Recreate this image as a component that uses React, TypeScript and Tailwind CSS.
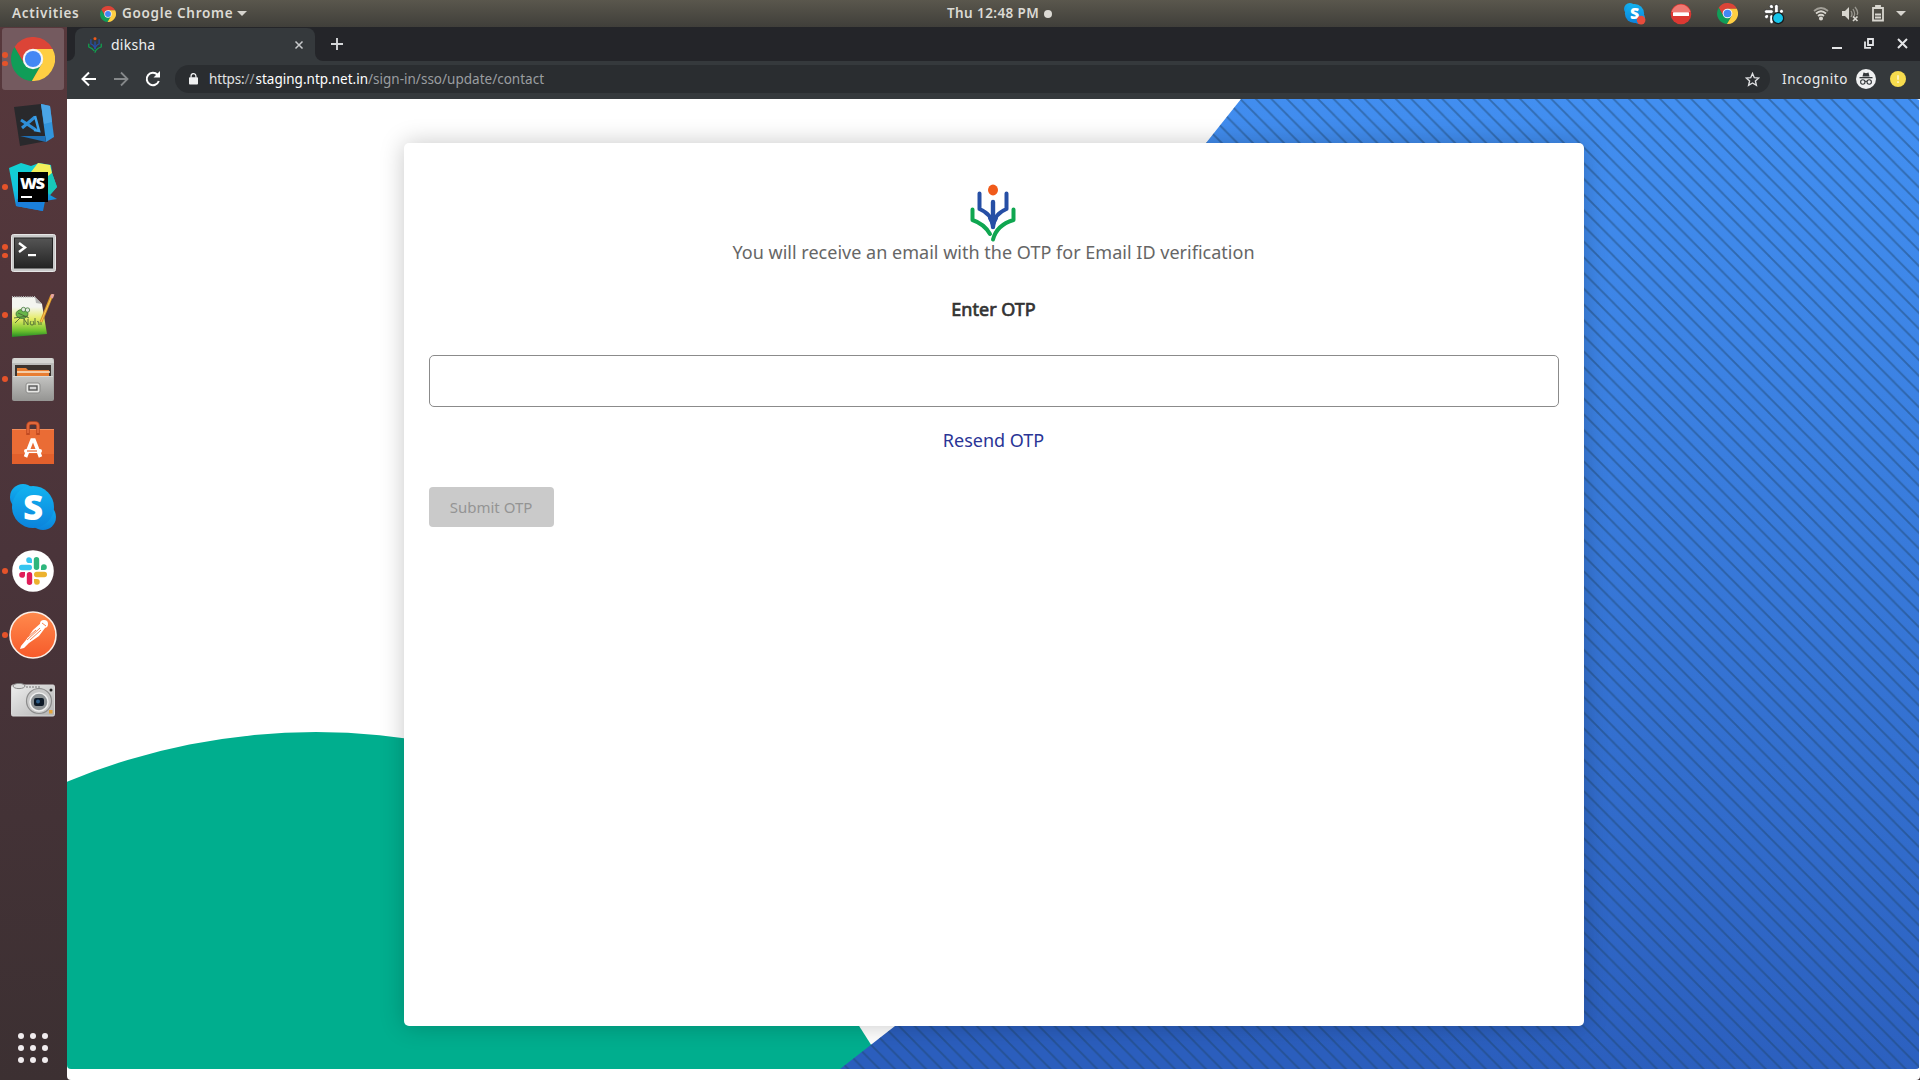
import React from "react";

const ubuntu = "font-['Noto_Sans',sans-serif]";

function Chrome({ size }: { size: number }) {
  return (
    <svg width={size} height={size} viewBox="-22 -22 44 44" className="shrink-0">
      <path d="M-18.46-11.97L-8.66 5L0 0L0-10L19.6-10A22 22 0 0 0-18.46-11.97Z" fill="#dc4437" />
      <path d="M-18.46-11.97A22 22 0 0 0-1.14 21.97L8.66 5L0 0L-8.66 5Z" fill="#109d58" />
      <path d="M19.6-10A22 22 0 0 1-1.14 21.97L8.66 5L0 0L0-10Z" fill="#fece43" />
      <circle r="10.2" fill="#f4f5f8" />
      <circle r="8.1" fill="#4487f4" />
    </svg>
  );
}

function Diksha({ width, height }: { width: number; height: number }) {
  return (
    <svg width={width} height={height} viewBox="0 0 46 58" preserveAspectRatio="none" fill="none" strokeLinecap="round" strokeLinejoin="round">
      <ellipse cx="23" cy="6" rx="5" ry="5.4" fill="#f05a1a" />
      <g stroke="#264fa5" strokeWidth="4">
        <path d="M9.5 9.500V25C17 28 22 33 23 42C24 33 29 28 36.500 25V9.500" />
        <path d="M23 18V43" strokeWidth="4.400" />
        <path d="M20 34L23 40L26 34" />
      </g>
      <g stroke="#0fa650" strokeWidth="4">
        <path d="M2.500 25.500V36C10 38.500 16 43 20 50" />
        <path d="M43.500 25.500V36C35 38.500 26 44 23 55.500" />
      </g>
    </svg>
  );
}

function SkypeIcon({ size, busy }: { size: number; busy?: boolean }) {
  return (
    <svg width={size} height={size} viewBox="0 0 46 46" className="overflow-visible">
      <defs>
        <linearGradient id="sky" x1="0" y1="0" x2="0" y2="1">
          <stop offset="0" stopColor="#12b3f0" />
          <stop offset="1" stopColor="#0b83dc" />
        </linearGradient>
      </defs>
      <g fill="url(#sky)">
        <circle cx="13" cy="13" r="13" />
        <circle cx="33" cy="33" r="13" />
        <circle cx="23" cy="23" r="21" />
      </g>
      <text x="23" y="35.500" textAnchor="middle" fontFamily="Open Sans, sans-serif" fontWeight="800" fontSize="35" fill="#fff">S</text>
      {busy && <circle cx="37.500" cy="37.500" r="9.500" fill="#e74c3c" />}
    </svg>
  );
}

function VSCode() {
  return (
    <svg width="42" height="44" viewBox="0 0 42 44">
      <path d="M0 4L27 1L33 38L6 43Z" fill="#29292c" />
      <path d="M27 1L36 3L40 34L32 39Z" fill="#3295dc" />
      <path d="M6 33L31 33L32 39Z" fill="#1f6fb4" />
      <path d="M27 1L36 3L38 19L30 21Z" fill="#4aa5e6" />
      <path d="M7 17L22 27M8 25L21 14" stroke="#2f8fd8" strokeWidth="3" />
      <path d="M21 13L25 28L20 27" stroke="#3ba0ea" strokeWidth="2.500" fill="none" />
    </svg>
  );
}

function WebStorm() {
  return (
    <svg width="48" height="48" viewBox="0 0 48 48">
      <defs>
        <linearGradient id="wsg" x1="0" y1="0" x2="0.300" y2="1">
          <stop offset="0" stopColor="#12d3cf" />
          <stop offset="0.550" stopColor="#12c6e0" />
          <stop offset="1" stopColor="#1586dd" />
        </linearGradient>
      </defs>
      <path d="M0 5L12 0L22 3L30 0L42 2L43 10L48 24L41 32L48 36L36 38L34 48L7 43Z" fill="url(#wsg)" />
      <path d="M22 9L29 0L41 2L43 10L39 15Z" fill="#f3f05a" />
      <path d="M39 13L43 10L48 24L41 32L39 30Z" fill="#18c8b8" />
      <path d="M8 36L34 38L34 48L7 43Z" fill="#1b7fdb" />
      <rect x="9" y="9" width="30" height="30" fill="#000" />
      <text x="11" y="25.500" fontFamily="Open Sans, sans-serif" fontWeight="800" fontSize="16.500" textLength="25" fill="#fff">WS</text>
      <rect x="12" y="33" width="11" height="2" fill="#fff" />
    </svg>
  );
}

function Terminal() {
  return (
    <svg width="45" height="38" viewBox="0 0 45 38">
      <defs>
        <linearGradient id="term" x1="0" y1="0" x2="0" y2="1">
          <stop offset="0" stopColor="#555" />
          <stop offset="1" stopColor="#242424" />
        </linearGradient>
      </defs>
      <rect x="0.500" y="0.500" width="44" height="37" rx="2" fill="#c9c9c9" stroke="#e6e6e6" />
      <rect x="3.500" y="4" width="38" height="30" fill="url(#term)" stroke="#222" />
      <path d="M8 9L14 13.500L8 18" stroke="#fff" strokeWidth="2.400" fill="none" />
      <rect x="17" y="20" width="8" height="2.200" fill="#fff" />
    </svg>
  );
}

function Notepad() {
  return (
    <svg width="46" height="46" viewBox="0 0 46 46">
      <defs>
        <linearGradient id="note" x1="0" y1="0" x2="0" y2="1">
          <stop offset="0.250" stopColor="#f4f5f0" />
          <stop offset="0.550" stopColor="#e5ec64" />
          <stop offset="0.850" stopColor="#6cc02d" />
          <stop offset="1" stopColor="#278a26" />
        </linearGradient>
      </defs>
      <path d="M2 3L25 3L32 10L37 40L2 43Z" fill="url(#note)" />
      <path d="M2 3H25" stroke="#bbb" strokeWidth="2" strokeDasharray="1 1.200" />
      <path d="M25 3L26 9L32 10Z" fill="#b5b5b5" />
      <g fill="#69b64a" stroke="#2f6b2a" strokeWidth="0.700">
        <ellipse cx="12" cy="20" rx="6" ry="4.500" />
        <circle cx="13.500" cy="15.500" r="2.200" fill="#dfe8da" />
        <circle cx="17.500" cy="16" r="2.200" fill="#dfe8da" />
      </g>
      <path d="M4 24L18 22M8 19L19 24M14 24V31M14 25L18 31V25M21 27Q19 31 22 31T23 27M25 24V31M27 28Q29 26 29 31M31 26V31M5 29L10 24" stroke="#4c6534" strokeWidth="0.900" fill="none" />
      <path d="M42 1L31 28" stroke="#db9428" strokeWidth="3" />
      <path d="M43 0L41.500 4" stroke="#e7a6a0" strokeWidth="3" />
      <path d="M41 4L31 28" stroke="#f6cd5c" strokeWidth="1" />
    </svg>
  );
}

function Files() {
  return (
    <svg width="42" height="43" viewBox="0 0 42 43">
      <defs>
        <linearGradient id="cab" x1="0" y1="0" x2="0" y2="1">
          <stop offset="0" stopColor="#c4c4c2" />
          <stop offset="1" stopColor="#969694" />
        </linearGradient>
      </defs>
      <rect width="42" height="43" rx="2" fill="url(#cab)" />
      <path d="M2 0H40L42 5H0Z" fill="#d6d6d3" />
      <rect x="3" y="7" width="36" height="12" fill="#3c3430" />
      <path d="M5 10H14L16 12H37V19H5Z" fill="#e87d31" />
      <path d="M5 14H38" stroke="#f9e7cf" strokeWidth="1.500" />
      <rect x="1" y="18" width="40" height="24" fill="url(#cab)" />
      <path d="M1 18.500H41" stroke="#d9d9d6" />
      <rect x="14" y="25" width="14" height="10" rx="2" fill="#e6e6e4" stroke="#8a8a88" />
      <rect x="17" y="28" width="8" height="4" fill="#d5d5d5" stroke="#555" strokeWidth="1.400" />
    </svg>
  );
}

function Software() {
  return (
    <svg width="42" height="44" viewBox="0 0 42 44">
      <rect x="0" y="8" width="42" height="35" rx="1" fill="#ea6c35" />
      <path d="M0 33H42V43H0Z" fill="#e2602c" />
      <path d="M0 8.500H42" stroke="#f28d5b" />
      <path d="M16 14V5Q16 2 19 2H23Q26 2 26 5V14" stroke="#c04a22" strokeWidth="3.600" fill="none" />
      <path d="M16 12V5Q16 2 19 2H23Q26 2 26 5V12" stroke="#e0683c" strokeWidth="1.800" fill="none" />
      <path d="M13.500 36L20 19H22L28.500 36" stroke="#fff" strokeWidth="3.600" fill="none" />
      <rect x="12" y="28" width="18" height="4" rx="2" fill="#fff" />
      <path d="M15 30H25" stroke="#e86732" strokeWidth="1.200" />
    </svg>
  );
}

function SlackMark({ mono }: { mono?: boolean }) {
  const colors = mono ? ["#fff", "#fff", "#fff", "#fff"] : ["#36c5f0", "#2eb67d", "#e01e5a", "#ecb22e"];
  return (
    <>
      {colors.map((color, index) => (
        <g key={index} fill={color} stroke={mono ? "#222" : "none"} strokeWidth="1" transform={`rotate(${[0, 90, 270, 180][index]})`}>
          <rect x="-14" y="-6.200" width="13" height="5.400" rx="2.700" />
          <path d="M-1-8V-11.200A2.900 2.900 0 1 0-3.900-8Z" />
        </g>
      ))}
    </>
  );
}

function SlackIcon() {
  return (
    <svg width="42" height="42" viewBox="-21 -21 42 42">
      <circle r="20.800" fill="#fff" />
      <SlackMark />
    </svg>
  );
}

function Postman() {
  return (
    <svg width="48" height="48" viewBox="0 0 48 48">
      <defs>
        <linearGradient id="post" x1="0" y1="0" x2="0" y2="1">
          <stop offset="0" stopColor="#ff8a4d" />
          <stop offset="1" stopColor="#f65a2a" />
        </linearGradient>
      </defs>
      <circle cx="24" cy="24" r="23" fill="url(#post)" stroke="#fbeee6" strokeWidth="1.600" />
      <circle cx="35" cy="13" r="4" fill="#fff" />
      <path d="M32 12L24 19L17 29L12 35L11 38L15 37L20 32L30 25L36 17Z" fill="#fff" />
      <path d="M31 17L18 29M32 19L21 29M27 19L19 26M33 12L37 15" stroke="#f47540" strokeWidth="0.900" />
    </svg>
  );
}

function Camera() {
  return (
    <svg width="44" height="34" viewBox="0 0 44 34">
      <defs>
        <linearGradient id="cam" x1="0" y1="0" x2="1" y2="1">
          <stop offset="0" stopColor="#eee" />
          <stop offset="1" stopColor="#b3b3b3" />
        </linearGradient>
      </defs>
      <rect x="0.500" y="2" width="43" height="31" rx="1.500" fill="url(#cam)" stroke="#d8d8d8" />
      <ellipse cx="8" cy="3" rx="6" ry="2.600" fill="#ddd" stroke="#888" />
      <path d="M15 4H30" stroke="#777" strokeDasharray="2 1" />
      <circle cx="28" cy="18" r="12.500" fill="#c8c8c8" stroke="#8b8b8b" strokeWidth="1.200" />
      <circle cx="28" cy="19" r="9" fill="#8d9295" stroke="#eee" strokeWidth="1.500" />
      <rect x="23" y="15" width="10" height="8" rx="2" fill="#0c1826" />
      <circle cx="27" cy="18.500" r="2" fill="#2c5c88" />
      <circle cx="40" cy="7" r="1.500" fill="#222" />
      <rect x="38" y="27" width="3.500" height="3.500" fill="#e3a33a" />
    </svg>
  );
}

const dock: { icon: React.ReactNode; dots: number; active?: boolean }[] = [
  { icon: <Chrome size={44} />, dots: 2, active: true },
  { icon: <div className="pt-1 pl-1"><VSCode /></div>, dots: 0 },
  { icon: <WebStorm />, dots: 1 },
  { icon: <div className="pt-[3px]"><Terminal /></div>, dots: 2 },
  { icon: <div className="pt-[3px]"><Notepad /></div>, dots: 1 },
  { icon: <Files />, dots: 1 },
  { icon: <Software />, dots: 0 },
  { icon: <SkypeIcon size={46} />, dots: 0 },
  { icon: <SlackIcon />, dots: 1 },
  { icon: <Postman />, dots: 1 },
  { icon: <div className="pt-[2px]"><Camera /></div>, dots: 0 },
];

function TopBar() {
  return (
    <header className={`flex h-[27px] shrink-0 items-center bg-linear-to-b from-[#5a574d] to-[#403f3a] text-[13.5px] font-semibold text-[#dcdad4] ${ubuntu}`}>
      <div className="flex w-[945px] items-center pl-3">
        <span className="w-[88px] whitespace-nowrap tracking-[0.720px]">Activities</span>
        <Chrome size={16} />
        <span className="ml-[6px] w-[112px] whitespace-nowrap tracking-[0.700px]">Google Chrome</span>
        <span className="ml-[3px] border-x-[5px] border-t-[5px] border-x-transparent border-t-[#d6d4ce]" />
      </div>
      <span className="w-[96px] whitespace-nowrap pl-[2px] tracking-[0.400px]">Thu 12:48 PM</span>
      <span className="ml-[3px] size-2 rounded-full bg-[#dcdad4]" />
      <div className="ml-auto flex items-center pr-[14px]">
        <div className="mr-[25px]"><SkypeIcon size={21} busy /></div>
        <svg width="22" height="22" viewBox="0 0 22 22">
          <circle cx="11" cy="11" r="10.300" fill="#dc3832" />
          <path d="M1.500 9A9.800 9.800 0 0 1 20.500 9Z" fill="#ee7973" />
          <rect x="3" y="9.200" width="16" height="3.800" rx="0.600" fill="#fff" />
        </svg>
        <div className="ml-[25px]"><Chrome size={21} /></div>
        <svg className="ml-[25px]" width="22" height="22" viewBox="-16 -16 32 32">
          <SlackMark mono />
          <circle cx="6" cy="6" r="8" fill="#16c5ea" stroke="#171a1c" strokeWidth="1.800" />
        </svg>
        <svg className="ml-[28px]" width="16" height="15" viewBox="0 0 16 15" fill="none" stroke="#d8d6cf" strokeWidth="1.700">
          <path d="M1 5Q8-1 15 5" opacity="0.600" />
          <path d="M3 7.500Q8 3 13 7.500M5 10Q8 7.500 11 10" />
          <circle cx="8" cy="12.500" r="1.200" fill="#d8d6cf" />
        </svg>
        <svg className="ml-[12px]" width="18" height="16" viewBox="0 0 18 16">
          <path d="M1 5H4L8 1V14L4 10H1Z" fill="#d8d6cf" />
          <path d="M10 5Q12 8 10 11M12 3Q15 8 12.500 11M14 1Q18 6 16 9" stroke="#99978f" fill="none" strokeWidth="1.300" />
          <path d="M12 10.500L16.500 15M16.500 10.500L12 15" stroke="#d8d6cf" strokeWidth="1.700" />
        </svg>
        <svg className="ml-[12px]" width="14" height="17" viewBox="0 0 14 17">
          <path d="M5 2V1H9V2M2 3H12V15.500H2Z" stroke="#d8d6cf" strokeWidth="1.800" fill="none" />
          <path d="M4 9.500H10M4 12.500H10" stroke="#d8d6cf" strokeWidth="1.800" />
        </svg>
        <span className="ml-[11px] border-x-[5px] border-t-[5px] border-x-transparent border-t-[#d6d4ce]" />
      </div>
    </header>
  );
}

function Dock() {
  return (
    <aside className="flex w-[67px] shrink-0 flex-col bg-linear-to-b from-[#57383c] via-[#4a343a] to-[#3c3032]">
      {dock.map((item, index) => (
        <div key={index} className="relative flex h-16 w-[66px] items-center justify-center">
          {item.active && <div className="absolute inset-x-[2px] top-[1px] h-[62px] rounded-[3px] bg-[#745a5f]" />}
          <div className="absolute inset-y-0 left-[2px] flex flex-col items-center justify-center gap-[3px]">
            {Array.from({ length: item.dots }, (_, dot) => (
              <span key={dot} className="size-[5.500px] rounded-full bg-[#e5532a]" />
            ))}
          </div>
          <div className="relative">{item.icon}</div>
        </div>
      ))}
      <div className="mt-auto mb-[17px] ml-[18px] grid w-[30px] grid-cols-3 gap-[6px]">
        {Array.from({ length: 9 }, (_, dot) => (
          <span key={dot} className="size-[6px] rounded-full bg-[#f1ecee]" />
        ))}
      </div>
    </aside>
  );
}

function TabStrip() {
  return (
    <div className={`flex h-[34px] shrink-0 items-end bg-[#242529] ${ubuntu}`}>
      <div className="h-[34px] w-2 bg-[#35393c]"><div className="h-full rounded-br-lg bg-[#242529]" /></div>
      <div className="flex h-[33px] w-[240px] items-center rounded-t-lg bg-[#35393c] pl-[13px] text-[14px] text-[#f0f1f2]">
        <Diksha width={14} height={16} />
        <span className="ml-[9px] tracking-[0.250px]">diksha</span>
        <svg className="mr-[11px] ml-auto" width="10" height="10" viewBox="0 0 10 10" stroke="#c8cacc" strokeWidth="1.500">
          <path d="M1.500 1.500L8.500 8.500M8.500 1.500L1.500 8.500" />
        </svg>
      </div>
      <div className="h-[34px] w-2 bg-[#35393c]"><div className="h-full rounded-bl-lg bg-[#242529]" /></div>
      <svg className="mb-[11px] ml-[8px]" width="12" height="12" viewBox="0 0 12 12" stroke="#d5d7d9" strokeWidth="1.900">
        <path d="M6 0V12M0 6H12" />
      </svg>
      <div className="mr-[12px] mb-[12px] ml-auto flex items-end">
        <span className="h-[2px] w-[10px] bg-[#e4e5e7]" />
        <svg className="ml-[22px]" width="10" height="11" viewBox="0 0 10 11" fill="none" stroke="#e4e5e7" strokeWidth="1.800">
          <path d="M4 1H9V7H4ZM1 3.500V9.800H7" />
        </svg>
        <svg className="ml-[23px]" width="11" height="11" viewBox="0 0 11 11" stroke="#e4e5e7" strokeWidth="2">
          <path d="M1 1L10 10M10 1L1 10" />
        </svg>
      </div>
    </div>
  );
}

function Toolbar() {
  return (
    <div className={`flex h-[38px] shrink-0 items-center bg-[#35393c] pb-[2px] pl-[14px] text-[13.500px] ${ubuntu}`}>
      <svg width="16" height="16" viewBox="0 0 16 16" fill="none" stroke="#fff" strokeWidth="2">
        <path d="M15 8H2M8 1.500L1.500 8L8 14.500" />
      </svg>
      <svg className="ml-[16px]" width="16" height="16" viewBox="0 0 16 16" fill="none" stroke="#85888a" strokeWidth="1.800">
        <path d="M1 8H14M8 1.500L14.500 8L8 14.500" />
      </svg>
      <svg className="ml-[16px]" width="16" height="16" viewBox="0 0 16 16" fill="none" stroke="#fff" strokeWidth="2">
        <path d="M13.800 10A6.200 6.200 0 1 1 12.500 3.700L14 5.200" />
        <path d="M15 0V6.500H8.500Z" fill="#fff" stroke="none" />
      </svg>
      <div className="ml-[14px] flex h-7 w-[1595px] items-center rounded-full bg-[#2a2d30] pr-[10px] pl-[14px]">
        <svg width="9" height="12" viewBox="0 0 10 13">
          <rect y="4.500" width="10" height="8" rx="1" fill="#eff0f1" />
          <path d="M2.300 5V3.200A2.700 2.700 0 0 1 7.700 3.200V5" stroke="#eff0f1" strokeWidth="1.400" fill="none" />
        </svg>
        <div className="ml-[11px] flex whitespace-nowrap text-[#9a9da0]">
          <span className="w-[46.500px] tracking-[-0.160px]"><span className="text-[#e2e3e4]">https:</span>//</span>
          <span className="w-[112.500px] tracking-[0.010px] text-white">staging.ntp.net.in</span>
          <span className="tracking-[0.010px]">/sign-in/sso/update/contact</span>
        </div>
        <svg className="ml-auto" width="15" height="15" viewBox="0 0 15 15" fill="none" stroke="#dfe0e2" strokeWidth="1.400">
          <path d="M7.500 1.500L9.300 5.700L13.800 6L10.400 9L11.400 13.300L7.500 11L3.600 13.300L4.600 9L1.200 6L5.700 5.700Z" />
        </svg>
      </div>
      <span className="ml-[12px] w-[67px] whitespace-nowrap tracking-[0.580px] text-[#e9eaec]">Incognito</span>
      <svg className="ml-[7px]" width="20" height="20" viewBox="0 0 20 20">
        <circle cx="10" cy="10" r="10" fill="#f0f1f2" />
        <path d="M6.500 7.500L7.500 3.500L10 4.200L12.500 3.500L13.500 7.500Z" fill="#34383b" />
        <rect x="3.500" y="8" width="13" height="1.300" fill="#34383b" />
        <g fill="none" stroke="#34383b" strokeWidth="1.100">
          <circle cx="6.800" cy="13" r="2.200" />
          <circle cx="13.200" cy="13" r="2.200" />
          <path d="M9 12.500Q10 12 11 12.500" />
        </g>
      </svg>
      <svg className="ml-[14px]" width="16" height="16" viewBox="0 0 16 16">
        <circle cx="8" cy="8" r="8" fill="#f7dc4e" />
        <path d="M8 4.300V8.700M8 10.300V12" stroke="#fdf5c8" strokeWidth="1.700" />
      </svg>
    </div>
  );
}

function Backdrop() {
  return (
    <svg className="absolute inset-0" width="1853" height="970" viewBox="67 99 1853 970">
      <defs>
        <linearGradient id="blue" gradientUnits="userSpaceOnUse" x1="1600" y1="99" x2="1500" y2="1069">
          <stop offset="0" stopColor="#428ff1" />
          <stop offset="1" stopColor="#2b5ebd" />
        </linearGradient>
        <pattern id="stripes" width="15.550" height="15.700" patternUnits="userSpaceOnUse" x="1287" y="99">
          <path d="M-2-2L18 18M-17.550-2L2.450 18M13.550-2L33.550 18" stroke="#1f4468" strokeOpacity="0.460" strokeWidth="1.900" />
        </pattern>
      </defs>
      <circle cx="316" cy="1381" r="649" fill="#00ae8e" />
      <path d="M1241 99L1206 143L895 1026L840 1069H1919V99Z" fill="url(#blue)" />
      <path d="M1241 99L1206 143L895 1026L840 1069H1919V99Z" fill="url(#stripes)" />
    </svg>
  );
}

function OtpCard() {
  return (
    <main className="relative mt-[44px] ml-[337px] flex h-[883px] w-[1180px] flex-col items-center rounded-[5px] bg-white px-[25px] pt-[41px] font-['Noto_Sans',sans-serif] text-[18px] shadow-[0_0_24px_rgba(0,0,0,0.22)]">
      <div className="pr-[2px]"><Diksha width={46} height={58} /></div>
      <p className="-mt-px h-[22px] pr-px leading-[22px] tracking-[0.015px] whitespace-nowrap text-[#666]">You will receive an email with the OTP for Email ID verification</p>
      <label className="mt-[35px] pr-px leading-[22px] text-[#333] [-webkit-text-stroke:0.700px_#333]">Enter OTP</label>
      <input className="mt-[35px] h-[52px] w-full shrink-0 rounded-[5px] border border-[#8b8b8b] bg-white" />
      <a className="mt-[22px] pr-px leading-[22px] text-[#2a3596]">Resend OTP</a>
      <button className="mt-[36px] h-10 w-[125px] self-start rounded-[4px] bg-[#cacaca] pr-px text-[15px] whitespace-nowrap text-[#949494]">Submit OTP</button>
    </main>
  );
}

export default function App() {
  return (
    <div className="flex h-[1080px] w-[1920px] flex-col overflow-hidden">
      <TopBar />
      <div className="flex min-h-0 flex-1">
        <Dock />
        <div className="flex min-w-0 flex-1 flex-col bg-[#3c3032]">
          <TabStrip />
          <Toolbar />
          <div className="flex-1 rounded-b-[4px] bg-white">
            <section className="relative h-[970px] overflow-hidden rounded-[4px] bg-white">
              <Backdrop />
              <OtpCard />
            </section>
          </div>
        </div>
      </div>
    </div>
  );
}
